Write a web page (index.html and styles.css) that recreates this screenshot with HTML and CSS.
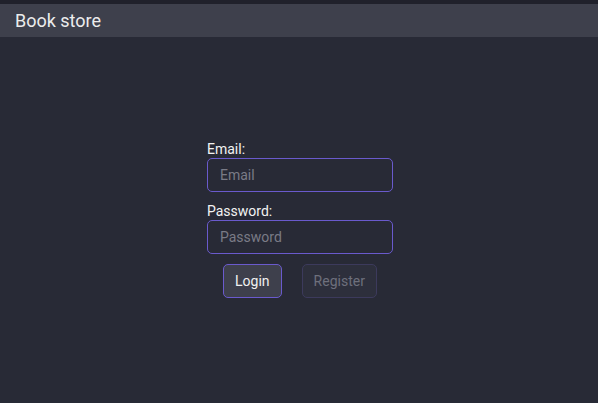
FILE: index.html
```html
<!DOCTYPE html>
<html>
<head>
<meta charset="utf-8">
<link rel="stylesheet" href="styles.css">
</head>
<body>
<div class="app">
  <header class="topbar"><span class="title">Book store</span></header>
  <main class="main">
    <form class="form">
      <label class="label" for="email">Email:</label>
      <input class="input" id="email" type="text" placeholder="Email">
      <label class="label label-gap" for="password">Password:</label>
      <input class="input" id="password" type="password" placeholder="Password">
      <div class="buttons">
        <button type="button" class="btn btn-primary">Login</button>
        <button type="button" class="btn btn-disabled">Register</button>
      </div>
    </form>
  </main>
</div>
</body>
</html>
```
FILE: styles.css
```css
html, body {
  margin: 0;
  padding: 0;
  height: 100%;
  background: #282a36;
  font-family: Roboto, "Noto Sans", sans-serif;
}
.app {
  height: 100%;
  display: flex;
  flex-direction: column;
}
.topbar {
  border-top: 4px solid #20212b;
  background: #3e404c;
  height: 33px;
  display: flex;
  align-items: center;
  padding-left: 15px;
}
.title {
  color: #ececec;
  font-size: 18px;
}
.main {
  display: flex;
  justify-content: center;
  padding-top: 104px;
  padding-left: 2px;
}
.form {
  width: 186px;
  display: flex;
  flex-direction: column;
}
.label {
  color: #f2f2f2;
  font-size: 14px;
  line-height: 16px;
  margin-bottom: 1px;
}
.label-gap {
  margin-top: 11px;
}
.input {
  box-sizing: border-box;
  height: 34px;
  width: 186px;
  border: 1px solid #6a5acd;
  border-radius: 5px;
  background: #282a36;
  padding: 0 12px;
  font-family: Roboto, sans-serif;
  font-size: 14px;
  color: #ddd;
  outline: none;
}
.input::placeholder {
  color: #7a7b86;
}
.buttons {
  display: flex;
  justify-content: center;
  gap: 20px;
  margin-top: 10px;
}
.btn {
  box-sizing: border-box;
  height: 34px;
  padding: 0 11px;
  border-radius: 5px;
  font-family: Roboto, sans-serif;
  font-size: 14px;
}
.btn-primary {
  background: #3e404c;
  border: 1px solid #6a5acd;
  color: #f0f0f0;
}
.btn-disabled {
  background: #2d2f3c;
  border: 1px solid #3c3a5c;
  color: #6e707c;
}
```
